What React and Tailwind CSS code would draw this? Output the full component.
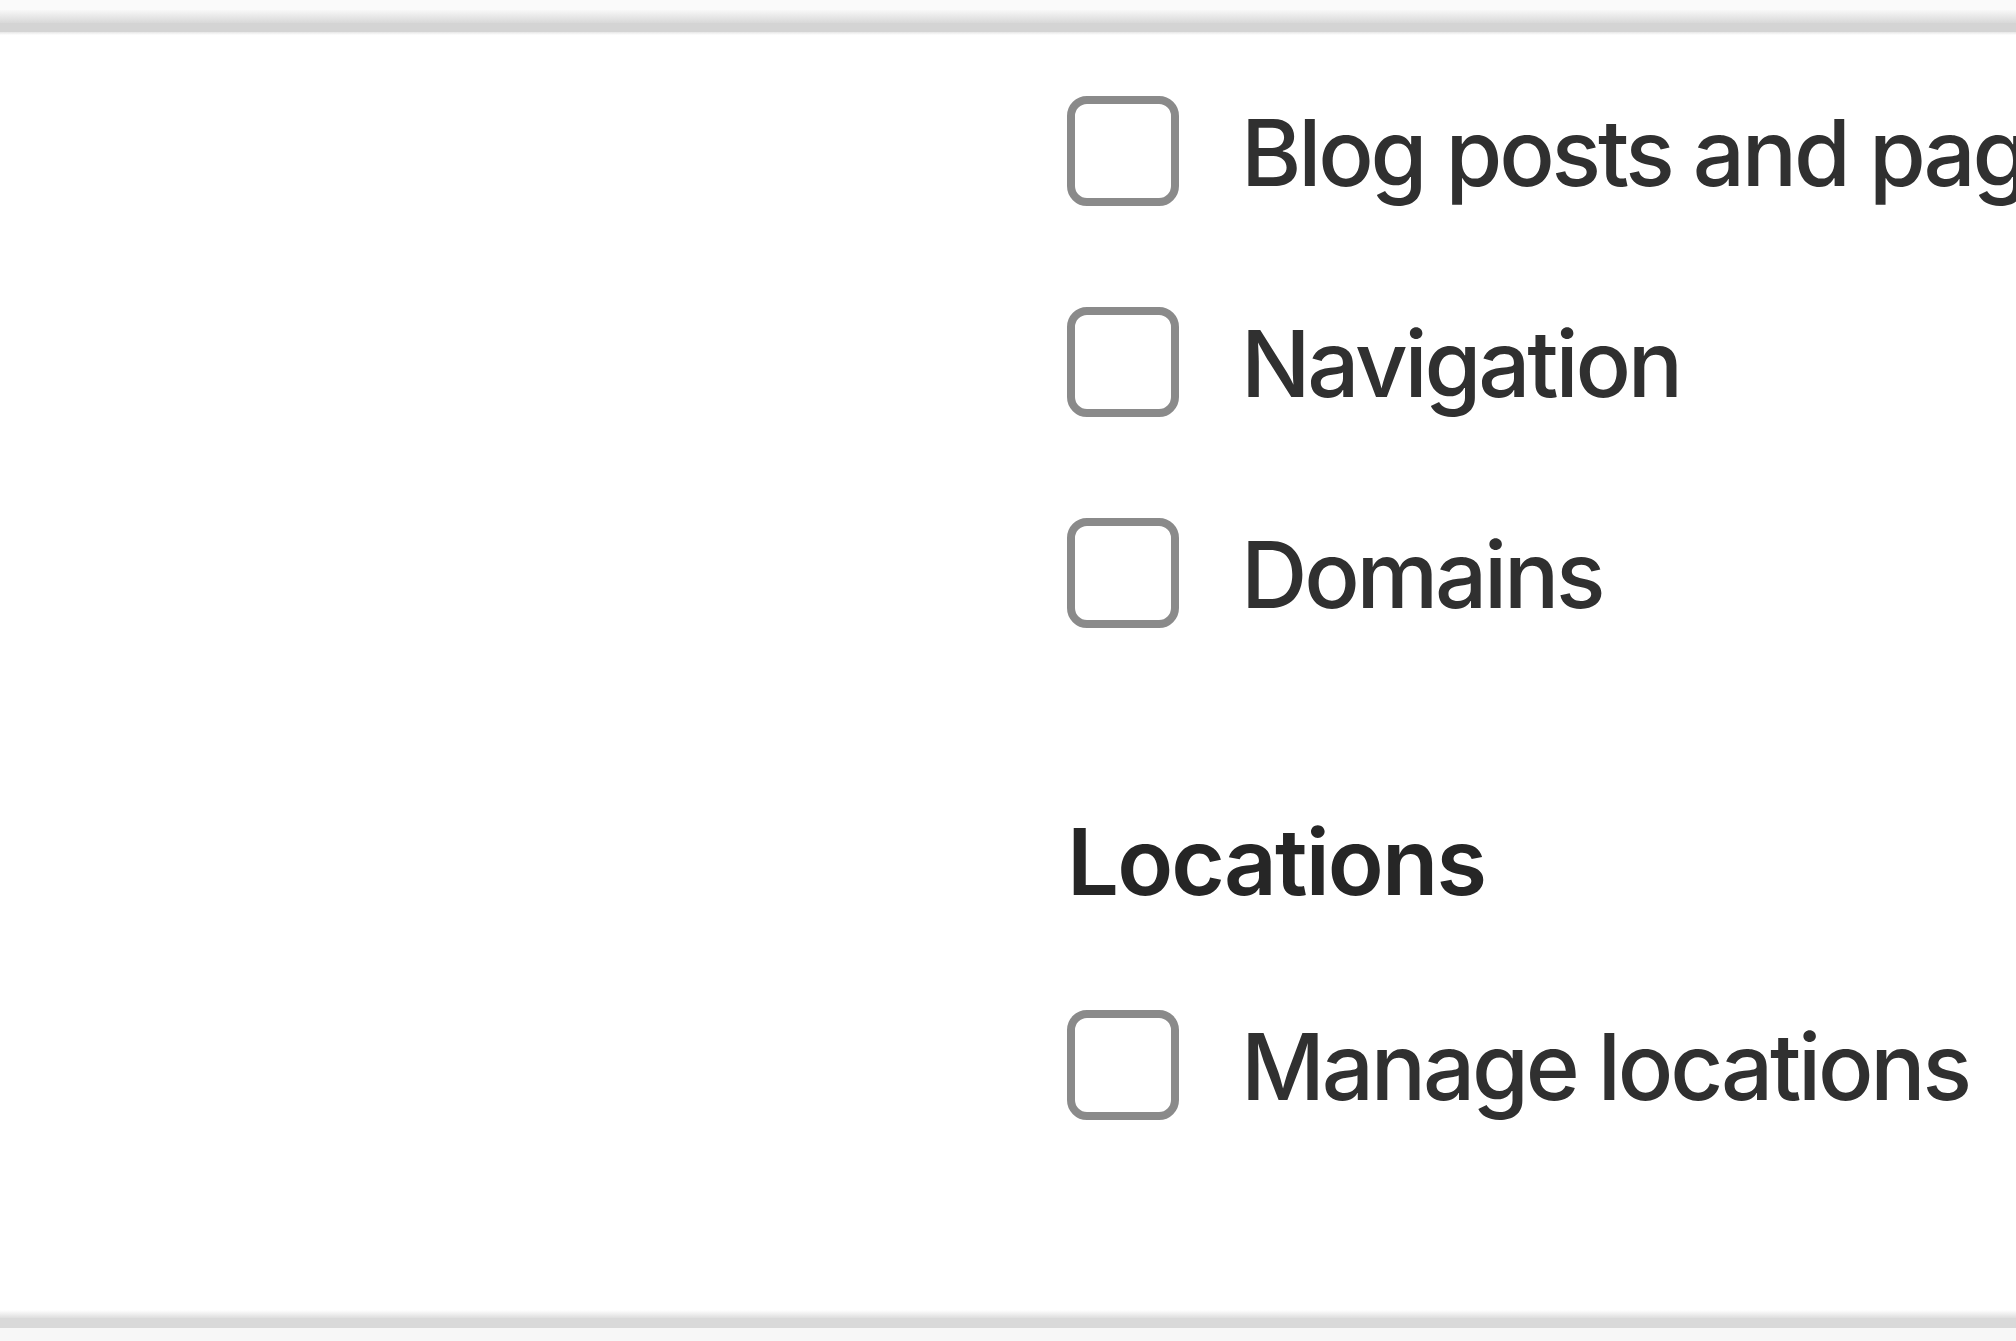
import React from 'react';

const GROUPS = [
  { items: ['Blog posts and pages', 'Navigation', 'Domains'] },
  { title: 'Locations', items: ['Manage locations'] },
];

function Checkbox() {
  return (
    <span className="block h-[110px] w-[112px] shrink-0 rounded-[20px] border-[8px] border-[#8a8a8a] bg-white" />
  );
}

function Row({ label }) {
  return (
    <label className="flex h-[110px] items-center gap-[62px] whitespace-nowrap">
      <Checkbox />
      <span className="pt-[4px] text-[92px] font-medium leading-none tracking-[-0.035em] text-[#303030]">{label}</span>
    </label>
  );
}

export default function App() {
  return (
    <div
      className="flex h-[1341px] w-[2016px] flex-col overflow-hidden bg-white"
      style={{ fontFamily: 'Inter, "Noto Sans", sans-serif' }}
    >
      {/* top edge of the card */}
      <div className="shrink-0">
        <div className="h-[10px] bg-[#fafafa]" />
        <div className="h-[13px] bg-linear-to-b from-[#f8f8f8] to-[#d8d8d8]" />
        <div className="h-[9px] bg-[#d4d4d4]" />
        <div className="h-[3px] bg-linear-to-b from-[#e6e6e6] to-white" />
      </div>

      <div className="flex flex-1 flex-col pl-[1067px] pt-[61px]">
        <div className="flex flex-col gap-[101px]">
          {GROUPS[0].items.map(item => (
            <Row key={item} label={item} />
          ))}
        </div>
        <h2 className="mt-[188px] text-[92px] font-semibold leading-none tracking-[-0.02em] text-[#262626]">
          {GROUPS[1].title}
        </h2>
        <div className="mt-[102px] flex flex-col gap-[101px]">
          {GROUPS[1].items.map(item => (
            <Row key={item} label={item} />
          ))}
        </div>
      </div>

      {/* bottom edge */}
      <div className="shrink-0">
        <div className="h-[8px] bg-linear-to-b from-white to-[#dedede]" />
        <div className="h-[10px] bg-[#d9d9d9]" />
        <div className="h-[13px] bg-[#f7f7f7]" />
      </div>
    </div>
  );
}
